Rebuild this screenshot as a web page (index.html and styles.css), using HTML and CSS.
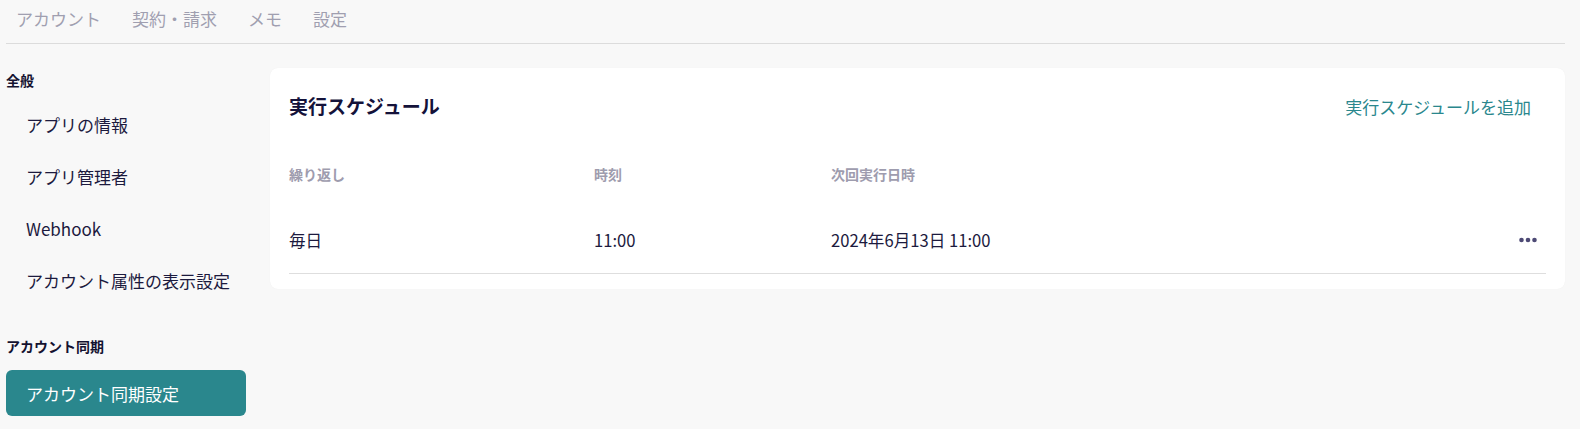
FILE: index.html
```html
<!DOCTYPE html>
<html lang="ja">
  <head>
    <meta charset="UTF-8" />
    <meta name="viewport" content="width=device-width, initial-scale=1.0" />
    <title>アカウント同期設定</title>
    <link rel="stylesheet" href="styles.css">
  </head>
  <body>
    <div id="page">
      <nav class="top-tabs">
        <a class="tab">アカウント</a>
        <a class="tab">契約・請求</a>
        <a class="tab">メモ</a>
        <a class="tab">設定</a>
      </nav>

      <div class="layout">
        <aside class="sidebar">
          <div class="group-label">全般</div>
          <a class="side-item">アプリの情報</a>
          <a class="side-item">アプリ管理者</a>
          <a class="side-item">Webhook</a>
          <a class="side-item">アカウント属性の表示設定</a>

          <div class="group-label second">アカウント同期</div>
          <a class="side-item active">アカウント同期設定</a>
        </aside>

        <main class="content">
          <section class="card">
            <div class="card-head">
              <h2>実行スケジュール</h2>
              <a class="add-link">実行スケジュールを追加</a>
            </div>

            <div class="row head-row">
              <div>繰り返し</div>
              <div>時刻</div>
              <div>次回実行日時</div>
              <div></div>
            </div>
            <div class="row data-row">
              <div>毎日</div>
              <div>11:00</div>
              <div>2024年6月13日 11:00</div>
              <div class="actions">
                <svg width="18" height="6" viewBox="0 0 18 6">
                  <circle cx="2.5" cy="3" r="2.3" />
                  <circle cx="9" cy="3" r="2.3" />
                  <circle cx="15.5" cy="3" r="2.3" />
                </svg>
              </div>
            </div>
          </section>
        </main>
      </div>
    </div>
  </body>
</html>
```

FILE: styles.css
```css
body {
  margin: 0;
  background-color: #f8f8f8;
  font-family: "Noto Sans CJK JP", "Noto Sans", sans-serif;
  color: #1c1a3e;
}
#page {
  padding: 0 15px 0 6px;
}
.top-tabs {
  display: flex;
  gap: 31px;
  align-items: center;
  padding-left: 10px;
  border-bottom: 1px solid #dcdcdc;
  box-sizing: border-box;
  height: 44px;
}
.tab {
  font-size: 17px;
  line-height: 38px;
  color: #a09fb0;
  margin-bottom: 5px;
}
.layout {
  display: flex;
  gap: 24px;
}
.sidebar {
  width: 240px;
  flex-shrink: 0;
  padding-top: 26px;
  display: flex;
  flex-direction: column;
}
.group-label {
  font-size: 14px;
  font-weight: bold;
  line-height: 20px;
  color: #141230;
  margin-bottom: 8px;
}
.group-label.second {
  margin-top: 30px;
  margin-bottom: 14px;
}
.side-item {
  display: flex;
  align-items: center;
  height: 52px;
  padding-left: 20px;
  font-size: 17px;
  color: #1c1a3e;
}
.side-item.active {
  height: 46px;
  background-color: #2a878d;
  color: #ffffff;
  border-radius: 6px;
}
.content {
  flex: 1;
  padding-top: 24px;
}
.card {
  background-color: #ffffff;
  border-radius: 8px;
  padding: 19px 19px 15px 19px;
  box-shadow: 0 0 1px rgba(0, 0, 0, 0.06);
}
.card-head {
  display: flex;
  justify-content: space-between;
  align-items: center;
  height: 36px;
}
.card-head h2 {
  margin: 0;
  font-size: 19px;
  font-weight: bold;
  color: #14123a;
}
.add-link {
  font-size: 17px;
  color: #2a878d;
  padding-right: 15px;
  margin-top: 3px;
}
.row {
  display: grid;
  grid-template-columns: 305px 237px 1fr auto;
  align-items: center;
}
.head-row {
  height: 40px;
  margin-top: 31px;
  font-size: 14px;
  font-weight: bold;
  color: #9e9cae;
}
.data-row {
  height: 65px;
  margin-top: 14px;
  font-size: 16.6px;
  border-bottom: 1px solid #dedede;
}
.data-row > div {
  padding-bottom: 1px;
}
.actions {
  padding-right: 9px;
  display: flex;
}
.actions svg {
  fill: #4d4a75;
}
```
